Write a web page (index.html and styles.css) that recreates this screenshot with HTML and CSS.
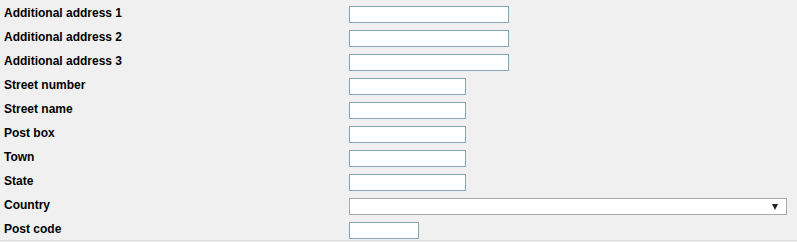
FILE: index.html
```html
<!DOCTYPE html>
<html>
<head>
<meta charset="utf-8">
<link rel="stylesheet" href="styles.css">
</head>
<body>
<div class="form">
  <div class="row"><label class="lbl">Additional address 1</label><input class="inp w-lg" type="text"></div>
  <div class="row"><label class="lbl">Additional address 2</label><input class="inp w-lg" type="text"></div>
  <div class="row"><label class="lbl">Additional address 3</label><input class="inp w-lg" type="text"></div>
  <div class="row"><label class="lbl">Street number</label><input class="inp w-md" type="text"></div>
  <div class="row"><label class="lbl">Street name</label><input class="inp w-md" type="text"></div>
  <div class="row"><label class="lbl">Post box</label><input class="inp w-md" type="text"></div>
  <div class="row"><label class="lbl">Town</label><input class="inp w-md" type="text"></div>
  <div class="row"><label class="lbl">State</label><input class="inp w-md" type="text"></div>
  <div class="row"><label class="lbl">Country</label><div class="sel-wrap"><select class="sel"><option></option></select></div></div>
  <div class="row last"><label class="lbl">Post code</label><input class="inp w-sm" type="text"></div>
</div>
</body>
</html>
```

FILE: styles.css
```css
html, body {
  margin: 0;
  padding: 0;
  background: #f0f0f0;
}
.form {
  padding-top: 3px;
  font-family: "Liberation Sans", Arial, sans-serif;
  font-size: 12px;
  font-weight: bold;
  color: #000;
  border-bottom: 1px solid #dcdcdc;
  width: 797px;
}
.row {
  display: grid;
  grid-template-columns: 349px 1fr;
  height: 24px;
  align-items: start;
}
.row.last {
  height: 21px;
}
.lbl {
  padding-left: 4px;
  margin-top: 3px;
  line-height: 14px;
  white-space: nowrap;
}
.inp {
  margin: 3px 0 0 0;
  box-sizing: border-box;
  height: 17px;
  border: 1px solid #87a6b4;
  background: #fff;
  padding: 0 2px;
  outline: none;
  font-family: "Liberation Sans", Arial, sans-serif;
  font-size: 12px;
}
.w-lg { width: 160px; }
.w-md { width: 117px; }
.w-sm { width: 70px; }
.sel-wrap {
  position: relative;
  margin-top: 3px;
  width: 438px;
  height: 17px;
}
.sel {
  appearance: none;
  -webkit-appearance: none;
  box-sizing: border-box;
  width: 100%;
  height: 17px;
  margin: 0;
  border: 1px solid #a9a9a9;
  border-radius: 0;
  background: #fff;
  outline: none;
  padding: 0 2px;
}
.sel-wrap::after {
  content: "";
  position: absolute;
  right: 9px;
  top: 6px;
  width: 0;
  height: 0;
  border-left: 3px solid transparent;
  border-right: 3px solid transparent;
  border-top: 6px solid #222;
  pointer-events: none;
}
```
